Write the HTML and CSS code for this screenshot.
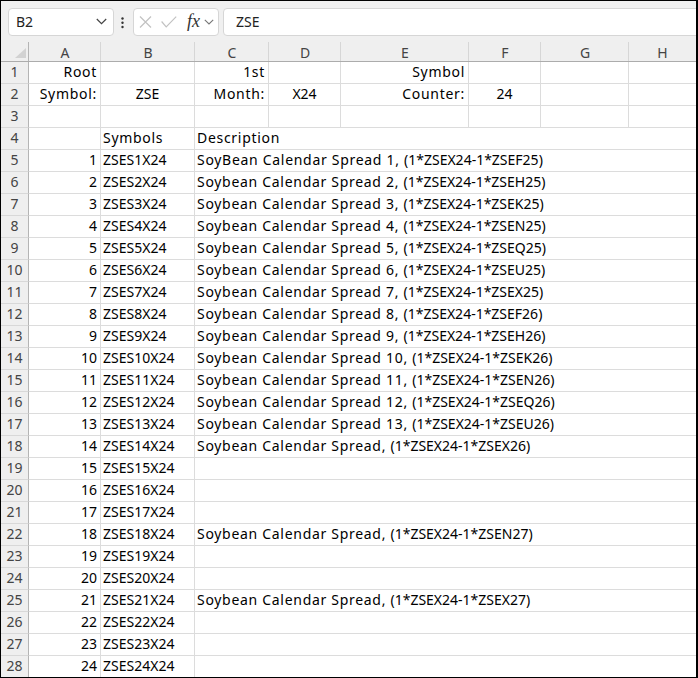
FILE: index.html
```html
<!DOCTYPE html>
<html>
<head>
<meta charset="utf-8">
<link rel="stylesheet" href="styles.css">
</head>
<body>
<div class="app">
  <div class="toolbar">
    <div class="namebox">
      <span class="name">B2</span>
      <svg class="chev" width="11" height="7" viewBox="0 0 11 7"><polyline points="0.8,1 5.5,5.7 10.2,1" fill="none" stroke="#444" stroke-width="1.2"/></svg>
    </div>
    <svg class="dots" width="3" height="28" viewBox="0 0 3 28"><circle cx="1.5" cy="10.5" r="1.2" fill="#333"/><circle cx="1.5" cy="14.8" r="1.2" fill="#333"/><circle cx="1.5" cy="19" r="1.2" fill="#333"/></svg>
    <div class="fxbox">
      <svg class="xicon" width="13" height="12" viewBox="0 0 13 12"><path d="M1 0.5 L12 11.5 M12 0.5 L1 11.5" stroke="#c2c2c2" stroke-width="1.2" fill="none"/></svg>
      <svg class="chk" width="16" height="12" viewBox="0 0 16 12"><polyline points="0.6,5.5 5.2,10.8 15.2,0.6" fill="none" stroke="#c2c2c2" stroke-width="1.2"/></svg>
      <span class="fx">fx</span>
      <svg class="chev2" width="10" height="6" viewBox="0 0 10 6"><polyline points="0.8,0.8 5,5 9.2,0.8" fill="none" stroke="#777" stroke-width="1.1"/></svg>
    </div>
    <div class="formula">ZSE</div>
  </div>
  <div class="sheet">
    <div class="hd corner"><svg width="11" height="10" viewBox="0 0 11 10"><polygon points="11,0 11,10 0,10" fill="#d2d2d2"/></svg></div>
    <div class="hd">A</div><div class="hd">B</div><div class="hd">C</div><div class="hd">D</div><div class="hd">E</div><div class="hd">F</div><div class="hd">G</div><div class="hd last">H</div>

    <div class="rh">1</div><div class="c r w">Root</div><div class="c"></div><div class="c r w">1st</div><div class="c"></div><div class="c r w">Symbol</div><div class="c"></div><div class="c"></div><div class="c last"></div>
    <div class="rh">2</div><div class="c r w">Symbol:</div><div class="c m">ZSE</div><div class="c r w">Month:</div><div class="c m">X24</div><div class="c r w">Counter:</div><div class="c m">24</div><div class="c"></div><div class="c last"></div>
    <div class="rh">3</div><div class="c"></div><div class="c"></div><div class="c"></div><div class="c"></div><div class="c"></div><div class="c"></div><div class="c"></div><div class="c last"></div>
    <div class="rh">4</div><div class="c"></div><div class="c w">Symbols</div><div class="c d w">Description</div>
    <div class="rh">5</div><div class="c r">1</div><div class="c">ZSES1X24</div><div class="c d"><span class="w">SoyBean Calendar Spread 1, </span>(1*ZSEX24-1*ZSEF25)</div>
    <div class="rh">6</div><div class="c r">2</div><div class="c">ZSES2X24</div><div class="c d"><span class="w">Soybean Calendar Spread 2, </span>(1*ZSEX24-1*ZSEH25)</div>
    <div class="rh">7</div><div class="c r">3</div><div class="c">ZSES3X24</div><div class="c d"><span class="w">Soybean Calendar Spread 3, </span>(1*ZSEX24-1*ZSEK25)</div>
    <div class="rh">8</div><div class="c r">4</div><div class="c">ZSES4X24</div><div class="c d"><span class="w">Soybean Calendar Spread 4, </span>(1*ZSEX24-1*ZSEN25)</div>
    <div class="rh">9</div><div class="c r">5</div><div class="c">ZSES5X24</div><div class="c d"><span class="w">Soybean Calendar Spread 5, </span>(1*ZSEX24-1*ZSEQ25)</div>
    <div class="rh">10</div><div class="c r">6</div><div class="c">ZSES6X24</div><div class="c d"><span class="w">Soybean Calendar Spread 6, </span>(1*ZSEX24-1*ZSEU25)</div>
    <div class="rh">11</div><div class="c r">7</div><div class="c">ZSES7X24</div><div class="c d"><span class="w">Soybean Calendar Spread 7, </span>(1*ZSEX24-1*ZSEX25)</div>
    <div class="rh">12</div><div class="c r">8</div><div class="c">ZSES8X24</div><div class="c d"><span class="w">Soybean Calendar Spread 8, </span>(1*ZSEX24-1*ZSEF26)</div>
    <div class="rh">13</div><div class="c r">9</div><div class="c">ZSES9X24</div><div class="c d"><span class="w">Soybean Calendar Spread 9, </span>(1*ZSEX24-1*ZSEH26)</div>
    <div class="rh">14</div><div class="c r">10</div><div class="c">ZSES10X24</div><div class="c d"><span class="w">Soybean Calendar Spread 10, </span>(1*ZSEX24-1*ZSEK26)</div>
    <div class="rh">15</div><div class="c r">11</div><div class="c">ZSES11X24</div><div class="c d"><span class="w">Soybean Calendar Spread 11, </span>(1*ZSEX24-1*ZSEN26)</div>
    <div class="rh">16</div><div class="c r">12</div><div class="c">ZSES12X24</div><div class="c d"><span class="w">Soybean Calendar Spread 12, </span>(1*ZSEX24-1*ZSEQ26)</div>
    <div class="rh">17</div><div class="c r">13</div><div class="c">ZSES13X24</div><div class="c d"><span class="w">Soybean Calendar Spread 13, </span>(1*ZSEX24-1*ZSEU26)</div>
    <div class="rh">18</div><div class="c r">14</div><div class="c">ZSES14X24</div><div class="c d"><span class="w">Soybean Calendar Spread, </span>(1*ZSEX24-1*ZSEX26)</div>
    <div class="rh">19</div><div class="c r">15</div><div class="c">ZSES15X24</div><div class="c d"></div>
    <div class="rh">20</div><div class="c r">16</div><div class="c">ZSES16X24</div><div class="c d"></div>
    <div class="rh">21</div><div class="c r">17</div><div class="c">ZSES17X24</div><div class="c d"></div>
    <div class="rh">22</div><div class="c r">18</div><div class="c">ZSES18X24</div><div class="c d"><span class="w">Soybean Calendar Spread, </span>(1*ZSEX24-1*ZSEN27)</div>
    <div class="rh">23</div><div class="c r">19</div><div class="c">ZSES19X24</div><div class="c d"></div>
    <div class="rh">24</div><div class="c r">20</div><div class="c">ZSES20X24</div><div class="c d"></div>
    <div class="rh">25</div><div class="c r">21</div><div class="c">ZSES21X24</div><div class="c d"><span class="w">Soybean Calendar Spread, </span>(1*ZSEX24-1*ZSEX27)</div>
    <div class="rh">26</div><div class="c r">22</div><div class="c">ZSES22X24</div><div class="c d"></div>
    <div class="rh">27</div><div class="c r">23</div><div class="c">ZSES23X24</div><div class="c d"></div>
    <div class="rh">28</div><div class="c r">24</div><div class="c">ZSES24X24</div><div class="c d"></div>
  </div>
</div>
</body>
</html>
```

FILE: styles.css
```css
* { box-sizing: border-box; }
html, body { margin: 0; padding: 0; background: #fff; }

.app {
  width: 698px;
  height: 678px;
  border: 1px solid #000;
  border-right-width: 2px;
  overflow: hidden;
  background: #f0f0f0;
  display: flex;
  flex-direction: column;
}

.toolbar {
  height: 39px;
  flex: none;
  display: flex;
  align-items: flex-start;
  padding: 7px 0 0 7px;
  overflow: hidden;
  font-family: "Noto Sans", sans-serif;
  font-size: 14px;
  color: #222;
}

.namebox {
  width: 106px;
  height: 28px;
  flex: none;
  background: #fff;
  border: 1px solid #d6d6d6;
  border-radius: 4px;
  display: flex;
  align-items: center;
  padding: 0 6px 1px 7px;
  line-height: 19px;
}
.namebox .chev { margin-left: auto; }

.dots { flex: none; margin-left: 7px; }

.fxbox {
  width: 86px;
  height: 28px;
  flex: none;
  margin-left: 9px;
  background: #fff;
  border: 1px solid #d6d6d6;
  border-radius: 4px;
  display: flex;
  align-items: center;
  padding-left: 5px;
}
.chk { margin-left: 9px; }
.fx {
  margin-left: 10px;
  font-family: "Liberation Serif", serif;
  font-style: italic;
  font-size: 18px;
  line-height: 20px;
  color: #333;
  padding-bottom: 2px;
}
.chev2 { margin-left: 4px; }

.formula {
  flex: 1;
  height: 28px;
  margin-left: 4px;
  margin-right: -20px;
  background: #fff;
  border: 1px solid #d6d6d6;
  border-radius: 4px;
  padding: 3px 0 0 12px;
  line-height: 19px;
}

.sheet {
  flex: none;
  display: grid;
  grid-template-columns: 28px 72px 94px 74px 72px 128px 72px 88px 67px;
  grid-auto-rows: 22px;
  background: #fff;
}

.hd {
  background: linear-gradient(#d6d6d6, #d6d6d6) right bottom / 1px 19px no-repeat, #efefef;
  border-bottom: 1px solid #acacac;
  font-family: "Noto Sans", sans-serif;
  font-size: 14px;
  line-height: 19px;
  padding-top: 3px;
  color: #444;
  text-align: center;
}
.hd.last { background: #efefef; }
.corner {
  display: flex;
  justify-content: flex-end;
  align-items: flex-end;
  padding: 0 3px 3px 0;
  background: linear-gradient(#b4b4b4, #b4b4b4) right bottom / 1px 19px no-repeat, #efefef;
}

.rh {
  background: #efefef;
  border-right: 1px solid #b4b4b4;
  border-bottom: 1px solid #d8d8d8;
  font-family: "Noto Sans", sans-serif;
  font-size: 14px;
  line-height: 19px;
  color: #444;
  text-align: center;
}

.c {
  border-right: 1px solid #dcdcdc;
  border-bottom: 1px solid #dcdcdc;
  font-family: "Noto Sans", sans-serif;
  font-size: 14px;
  line-height: 19px;
  color: #000;
  white-space: nowrap;
  overflow: hidden;
  padding: 0 2px;
}
.c.r { text-align: right; padding-right: 3px; }
.c.m { text-align: center; }
.c.last { border-right: none; }
.c.d { grid-column: span 6; border-right: none; }
.w { letter-spacing: 0.7px; }
```
